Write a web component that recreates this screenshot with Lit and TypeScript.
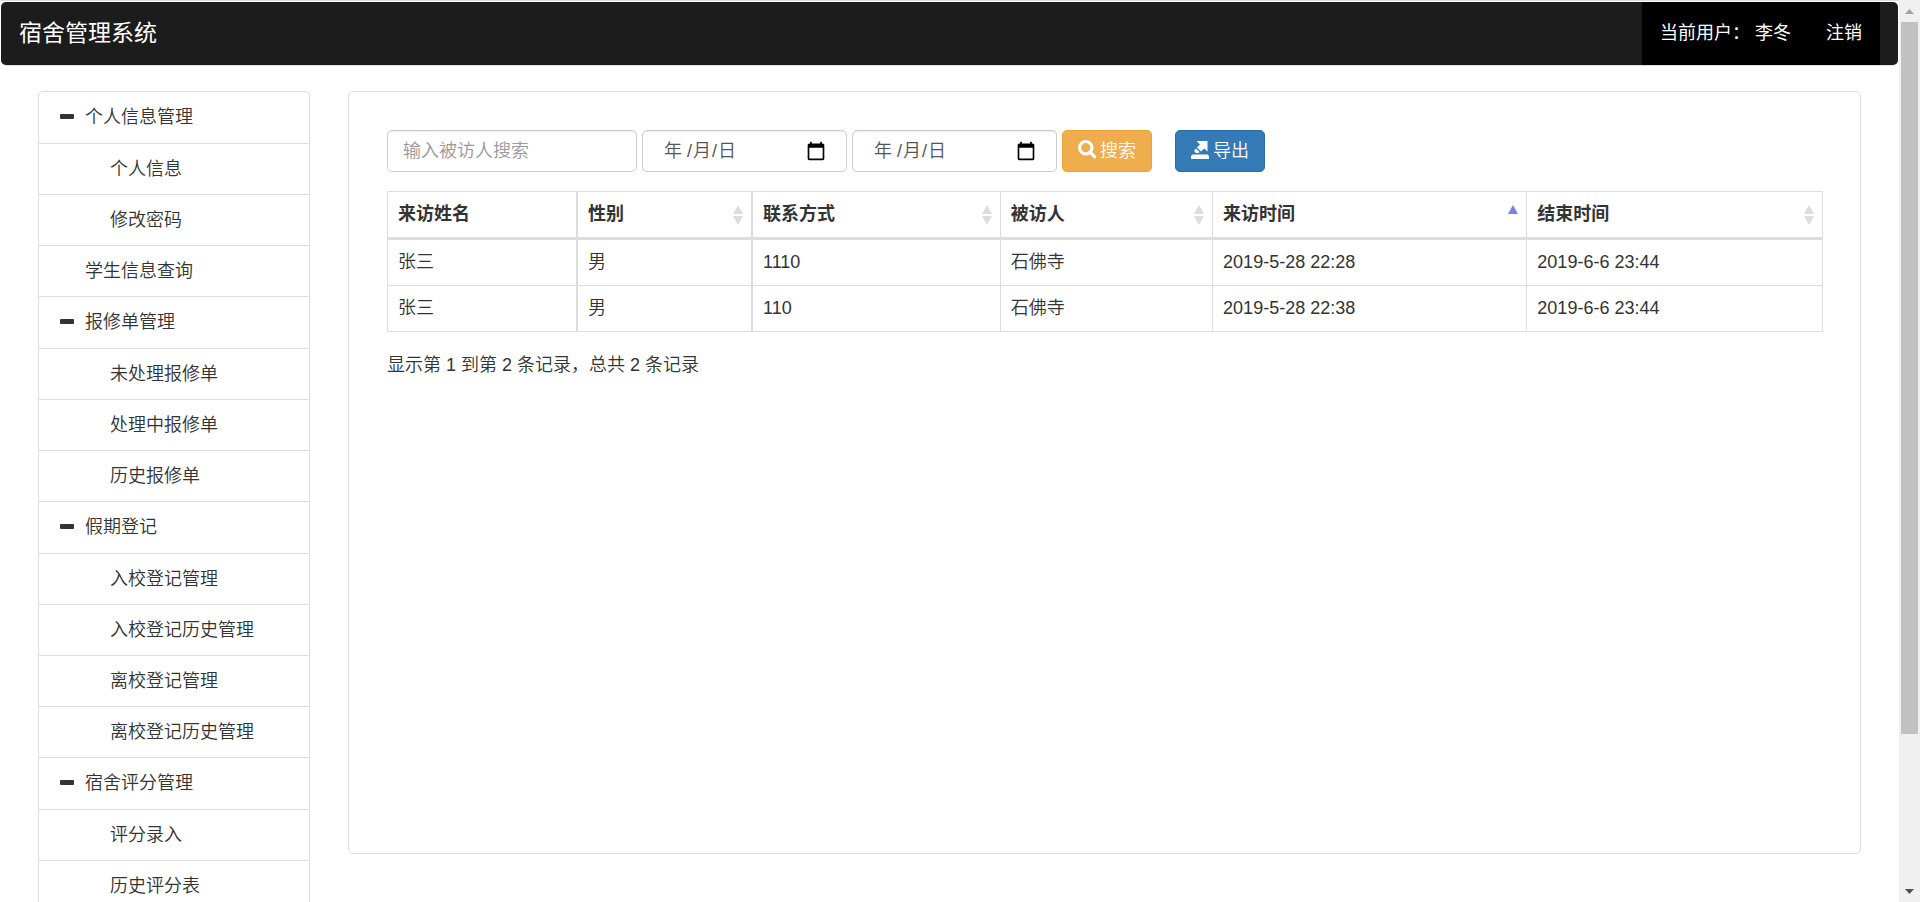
import { LitElement, html, css, svg } from "lit";
import { customElement, property, state } from "lit/decorators.js";
import { classMap } from "lit/directives/class-map.js";

const FONT = css`"Liberation Sans", "Noto Sans CJK SC", sans-serif`;

interface MenuGroup {
  title: string;
  items: string[];
}

const MENU: MenuGroup[] = [
  { title: "个人信息管理", items: ["个人信息", "修改密码"] },
  { title: "学生信息查询", items: [] },
  { title: "报修单管理", items: ["未处理报修单", "处理中报修单", "历史报修单"] },
  {
    title: "假期登记",
    items: ["入校登记管理", "入校登记历史管理", "离校登记管理", "离校登记历史管理"],
  },
  { title: "宿舍评分管理", items: ["评分录入", "历史评分表"] },
];

@customElement("top-bar")
export class TopBar extends LitElement {
  @property() user = "";

  static styles = css`
    :host {
      display: block;
      padding: 2px 1px 0;
      box-shadow: inset 0 1px #dcdcdc;
    }
    .bar {
      display: flex;
      justify-content: space-between;
      align-items: stretch;
      padding-right: 18px;
      background: #1c1c1c;
      border-radius: 5px;
      box-shadow: 0 1px #e0e0e0;
      color: #fff;
      font-size: 18px;
      font-weight: 400;
      line-height: 25px;
    }
    a {
      color: inherit;
      text-decoration: none;
    }
    .brand {
      padding: 19px 18px;
      font-size: 23px;
    }
    .session {
      display: flex;
      gap: 35px;
      padding: 19px 18px;
      background: #000;
    }
    .user {
      white-space: pre;
    }
  `;

  render() {
    return html`<header class="bar">
      <a class="brand" href="#">宿舍管理系统</a>
      <nav class="session">
        <a class="user" href="#">当前用户： ${this.user}</a>
        <a href="#">注销</a>
      </nav>
    </header>`;
  }
}

@customElement("side-menu")
export class SideMenu extends LitElement {
  @state() private closed = new Set<string>();

  static styles = css`
    :host {
      display: block;
    }
    .menu,
    .sub {
      margin: 0;
      padding: 0;
      list-style: none;
    }
    .menu {
      border: 1px solid #ddd;
      border-bottom: 0;
      border-radius: 5px 5px 0 0;
    }
    .row {
      display: flex;
      align-items: center;
      gap: 10px;
      box-sizing: border-box;
      width: 100%;
      margin: 0;
      padding: 12px 20px;
      border: 0;
      border-bottom: 1px solid #ddd;
      background: none;
      color: #333;
      font: inherit;
      line-height: 26px;
      text-align: left;
      text-decoration: none;
    }
    .group {
      line-height: 27px;
      cursor: pointer;
    }
    .single {
      padding-left: 46px;
    }
    .child {
      padding-left: 71px;
    }
    .mark {
      width: 16px;
      height: 18px;
      fill: currentColor;
    }
  `;

  private toggle(title: string) {
    const next = new Set(this.closed);
    if (!next.delete(title)) next.add(title);
    this.closed = next;
  }

  render() {
    return html`<ul class="menu">
      ${MENU.map((group) => {
        if (!group.items.length) {
          return html`<li><a class="row single" href="#">${group.title}</a></li>`;
        }
        const open = !this.closed.has(group.title);
        return html`<li>
          <button
            class="row group"
            type="button"
            aria-expanded=${open}
            @click=${() => this.toggle(group.title)}
          >
            <svg class="mark" viewBox="0 0 16 18" aria-hidden="true">
              <rect x="1" y="5" width="14" height="5" rx="1" />
              ${open ? null : svg`<rect x="5" y="1" width="5" height="14" rx="1" />`}
            </svg>
            ${group.title}
          </button>
          ${open
            ? html`<ul class="sub">
                ${group.items.map(
                  (item) => html`<li><a class="row child" href="#">${item}</a></li>`
                )}
              </ul>`
            : null}
        </li>`;
      })}
    </ul>`;
  }
}

@customElement("search-form")
export class SearchForm extends LitElement {
  @state() private dates: Record<string, string> = {};

  static styles = css`
    :host {
      display: block;
    }
    .form {
      display: flex;
      flex-wrap: wrap;
      gap: 5px;
    }
    .field,
    .date {
      box-sizing: border-box;
      height: 42px;
      border: 1px solid #ccc;
      border-radius: 5px;
      background: #fff;
      box-shadow: inset 0 1px 1px rgba(0, 0, 0, 0.075);
      color: #555;
      font: inherit;
    }
    .field {
      width: 250px;
      padding: 0 15px;
    }
    .field::placeholder {
      color: #999;
      opacity: 1;
    }
    .date {
      display: grid;
      grid-template-columns: 1fr 20px;
      align-items: center;
      width: 205px;
      padding: 0 20px;
    }
    .picker {
      grid-area: 1 / 1 / 2 / 3;
      width: 100%;
      padding: 0;
      border: 0;
      outline: 0;
      background: none;
      color: inherit;
      font: inherit;
    }
    .picker.empty::-webkit-datetime-edit {
      opacity: 0;
    }
    .picker::-webkit-calendar-picker-indicator {
      opacity: 0;
    }
    .hint {
      display: flex;
      gap: 1px;
      grid-area: 1 / 1;
      padding-left: 1px;
      white-space: pre;
      pointer-events: none;
    }
    .calendar {
      grid-area: 1 / 2;
      width: 20px;
      height: 20px;
      fill: #000;
      pointer-events: none;
    }
    .btn {
      display: flex;
      align-items: center;
      justify-content: center;
      gap: 4px;
      box-sizing: border-box;
      height: 42px;
      padding: 0 15px;
      border: 1px solid;
      border-radius: 5px;
      color: #fff;
      font: inherit;
      cursor: pointer;
    }
    .search {
      border-color: #eea236;
      background: #f0ad4e;
    }
    .export {
      margin-left: 18px;
      border-color: #2e6da4;
      background: #337ab7;
    }
    .icon {
      width: 18px;
      height: 22px;
    }
  `;

  private renderDate(name: string, label: string) {
    const value = this.dates[name] ?? "";
    return html`<div class="date">
      <input
        class=${classMap({ picker: true, empty: !value })}
        type="date"
        name=${name}
        aria-label=${label}
        .value=${value}
        @change=${(e: Event) => {
          this.dates = { ...this.dates, [name]: (e.target as HTMLInputElement).value };
        }}
      />
      ${value
        ? null
        : html`<span class="hint"><span>年 /</span><span>月</span><span>/</span><span>日</span></span>`}
      <svg class="calendar" viewBox="0 0 24 24" aria-hidden="true">
        <path
          d="M20 3h-1V1h-2v2H7V1H5v2H4c-1.1 0-2 .9-2 2v16c0 1.1.9 2 2 2h16c1.1 0 2-.9 2-2V5c0-1.1-.9-2-2-2zm0 18H4V8h16v13z"
        />
      </svg>
    </div>`;
  }

  render() {
    return html`<form class="form" @submit=${(e: Event) => e.preventDefault()}>
      <input
        class="field"
        type="text"
        name="keyword"
        placeholder="输入被访人搜索"
        aria-label="输入被访人搜索"
      />
      ${this.renderDate("from", "来访时间")} ${this.renderDate("to", "结束时间")}
      <button class="btn search" type="submit">
        <svg class="icon" viewBox="0 0 18 22" aria-hidden="true">
          <circle cx="7.8" cy="7.8" r="6.2" fill="none" stroke="#fff" stroke-width="3" />
          <path d="M12 12l4.800 4.800" fill="none" stroke="#fff" stroke-width="3.200" stroke-linecap="round" />
        </svg>
        搜索
      </button>
      <button class="btn export" type="button">
        <svg class="icon" viewBox="0 0 18 22" aria-hidden="true">
          <path d="M5.5 1H16.5V11.500L13.300 8.500 10 11.500 6 7.500 9 4.500z" fill="#fff" />
          <path d="M5 8.500L8.500 12 7.500 13H5L3.500 11.800V10z" fill="#fff" />
          <path d="M1.500 14.500h15L18 16v3H0v-3z" fill="#fff" />
        </svg>
        导出
      </button>
    </form>`;
  }
}

type Sort = "none" | "both" | "asc";

const COLUMNS: { label: string; sort: Sort }[] = [
  { label: "来访姓名", sort: "none" },
  { label: "性别", sort: "both" },
  { label: "联系方式", sort: "both" },
  { label: "被访人", sort: "both" },
  { label: "来访时间", sort: "asc" },
  { label: "结束时间", sort: "both" },
];

const VISITS = [
  ["张三", "男", "1110", "石佛寺", "2019-5-28 22:28", "2019-6-6 23:44"],
  ["张三", "男", "110", "石佛寺", "2019-5-28 22:38", "2019-6-6 23:44"],
];

@customElement("visit-table")
export class VisitTable extends LitElement {
  static styles = css`
    :host {
      display: block;
    }
    .table {
      width: 100%;
      border-collapse: collapse;
      table-layout: fixed;
    }
    th,
    td {
      box-sizing: border-box;
      padding: 10px;
      border: 1px solid #ddd;
      line-height: 25px;
      text-align: left;
      white-space: nowrap;
    }
    th {
      border-bottom-width: 3px;
      font-weight: bold;
    }
    th:nth-child(1) {
      width: 13.2%;
    }
    th:nth-child(2) {
      width: 12.2%;
    }
    th:nth-child(3) {
      width: 17.3%;
    }
    th:nth-child(4) {
      width: 14.8%;
    }
    th:nth-child(5) {
      width: 21.9%;
    }
    th:nth-child(1),
    td:nth-child(1),
    th:nth-child(2),
    td:nth-child(2) {
      border-right-width: 2px;
    }
    .head {
      display: flex;
      justify-content: space-between;
      align-items: center;
      margin-right: -3px;
    }
    .arrows {
      width: 12px;
      height: 20px;
      fill: #ddd;
    }
    .asc {
      fill: #7b81e0;
    }
    .summary {
      margin: 0;
      padding-top: 20px;
      line-height: 26px;
    }
  `;

  private arrows(sort: Sort) {
    if (sort === "none") return null;
    return html`<svg
      class=${classMap({ arrows: true, asc: sort === "asc" })}
      viewBox="0 0 12 20"
      aria-hidden="true"
    >
      <path d="M6 0l5 9H1z" />
      ${sort === "both" ? svg`<path d="M1 11h10l-5 9z" />` : null}
    </svg>`;
  }

  render() {
    return html`<table class="table">
        <thead>
          <tr>
            ${COLUMNS.map(
              (c) => html`<th scope="col">
                <div class="head">${c.label}${this.arrows(c.sort)}</div>
              </th>`
            )}
          </tr>
        </thead>
        <tbody>
          ${VISITS.map((row) => html`<tr>${row.map((cell) => html`<td>${cell}</td>`)}</tr>`)}
        </tbody>
      </table>
      <p class="summary">显示第 1 到第 2 条记录，总共 2 条记录</p>`;
  }
}

@customElement("app-root")
export class AppRoot extends LitElement {
  static styles = css`
    :host {
      display: grid;
      grid-template-columns: minmax(0, 1fr) 21px;
      height: 100vh;
      overflow: hidden;
      background: #fff;
      color: #333;
      font-family: ${FONT};
      font-size: 18px;
      font-weight: 350;
      line-height: 26px;
    }
    .view {
      min-height: 0;
      overflow: hidden;
    }
    .main {
      display: grid;
      grid-template-columns: 272px minmax(0, 1fr);
      align-items: start;
      gap: 38px;
      padding: 26px 38px 0;
    }
    .panel {
      display: grid;
      align-content: start;
      gap: 19px;
      box-sizing: border-box;
      min-height: calc(100vh - 139px);
      padding: 38px 37px 38px 38px;
      border: 1px solid #ddd;
      border-radius: 5px;
    }
    .scroll {
      display: grid;
      grid-template-rows: 22px minmax(0, 1fr) 22px;
      justify-items: center;
      align-items: center;
      background: #f0f0f0;
    }
    .track {
      align-self: stretch;
      width: 17px;
    }
    .thumb {
      height: 83%;
      background: #c1c1c1;
    }
    .tip {
      width: 9px;
      height: 5px;
      fill: #a3a3a3;
    }
    .down {
      fill: #505050;
    }
  `;

  render() {
    return html`<div class="view">
        <top-bar user="李冬"></top-bar>
        <div class="main">
          <side-menu></side-menu>
          <main class="panel">
            <search-form></search-form>
            <visit-table></visit-table>
          </main>
        </div>
      </div>
      <div class="scroll" aria-hidden="true">
        <svg class="tip" viewBox="0 0 9 5"><path d="M0 5l4.500-5L9 5z" /></svg>
        <div class="track"><div class="thumb"></div></div>
        <svg class="tip down" viewBox="0 0 9 5"><path d="M0 0h9L4.500 5z" /></svg>
      </div>`;
  }
}
